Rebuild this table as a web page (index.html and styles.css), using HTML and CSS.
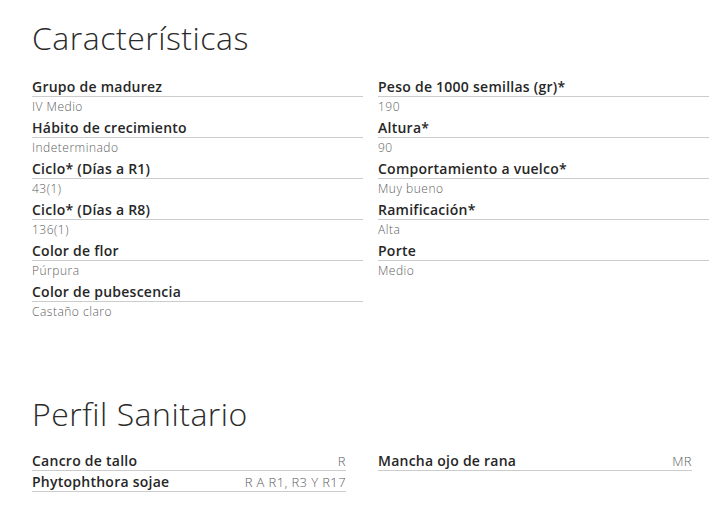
FILE: index.html
```html
<!DOCTYPE html>
<html lang="es">
<head>
<meta charset="utf-8">
<title>Características</title>
<link rel="stylesheet" href="styles.css">
</head>
<body>
<main class="page">
  <section class="section">
    <h2 class="title">Características</h2>
    <div class="grid">
      <dl class="col">
        <div class="item"><dt class="label">Grupo de madurez</dt><dd class="value">IV Medio</dd></div>
        <div class="item"><dt class="label">Hábito de crecimiento</dt><dd class="value">Indeterminado</dd></div>
        <div class="item"><dt class="label">Ciclo* (Días a R1)</dt><dd class="value">43(1)</dd></div>
        <div class="item"><dt class="label">Ciclo* (Días a R8)</dt><dd class="value">136(1)</dd></div>
        <div class="item"><dt class="label">Color de flor</dt><dd class="value">Púrpura</dd></div>
        <div class="item"><dt class="label">Color de pubescencia</dt><dd class="value">Castaño claro</dd></div>
      </dl>
      <dl class="col">
        <div class="item"><dt class="label">Peso de 1000 semillas (gr)*</dt><dd class="value">190</dd></div>
        <div class="item"><dt class="label">Altura*</dt><dd class="value">90</dd></div>
        <div class="item"><dt class="label">Comportamiento a vuelco*</dt><dd class="value">Muy bueno</dd></div>
        <div class="item"><dt class="label">Ramificación*</dt><dd class="value">Alta</dd></div>
        <div class="item"><dt class="label">Porte</dt><dd class="value">Medio</dd></div>
      </dl>
    </div>
  </section>
  <section class="section section-health">
    <h2 class="title">Perfil Sanitario</h2>
    <div class="grid">
      <dl class="col col-health">
        <div class="row"><dt class="label">Cancro de tallo</dt><dd class="value">R</dd></div>
        <div class="row"><dt class="label">Phytophthora sojae</dt><dd class="value">R A R1, R3 Y R17</dd></div>
      </dl>
      <dl class="col col-health">
        <div class="row"><dt class="label">Mancha ojo de rana</dt><dd class="value">MR</dd></div>
      </dl>
    </div>
  </section>
</main>
</body>
</html>
```
FILE: styles.css
```css
html, body {
  margin: 0;
  padding: 0;
  background: #ffffff;
}
body {
  font-family: "Open Sans", "Liberation Sans", sans-serif;
  color: #333333;
}
.page {
  padding: 18px 17px 0 32px;
}
.title {
  margin: 0;
  font-size: 32px;
  line-height: 40px;
  font-weight: 300;
  letter-spacing: 0.5px;
  color: #2b2b2b;
}
.grid {
  display: grid;
  grid-template-columns: 1fr 1fr;
  column-gap: 15px;
  margin-top: 20px;
}
.col {
  margin: 0;
}
.item {
  display: block;
}
.label {
  margin: 0;
  font-size: 14px;
  line-height: 18px;
  font-weight: 600;
  letter-spacing: 0.25px;
  color: #262626;
  border-bottom: 1px solid #cccccc;
}
.value {
  margin: 0;
  font-size: 12px;
  line-height: 20px;
  padding-bottom: 2px;
  font-weight: 300;
  letter-spacing: 0.5px;
  color: #5e5e5e;
}
.section-health {
  margin-top: 70px;
}
.section-health .grid {
  margin-top: 16px;
}
.col-health {
  padding-right: 17px;
}
.row {
  display: flex;
  justify-content: space-between;
  align-items: baseline;
  padding-top: 2px;
  border-bottom: 1px solid #cccccc;
}
.row .label {
  border-bottom: none;
}
.row .value {
  font-size: 13px;
  line-height: 18px;
  letter-spacing: 0.4px;
  padding-bottom: 0;
}
```
